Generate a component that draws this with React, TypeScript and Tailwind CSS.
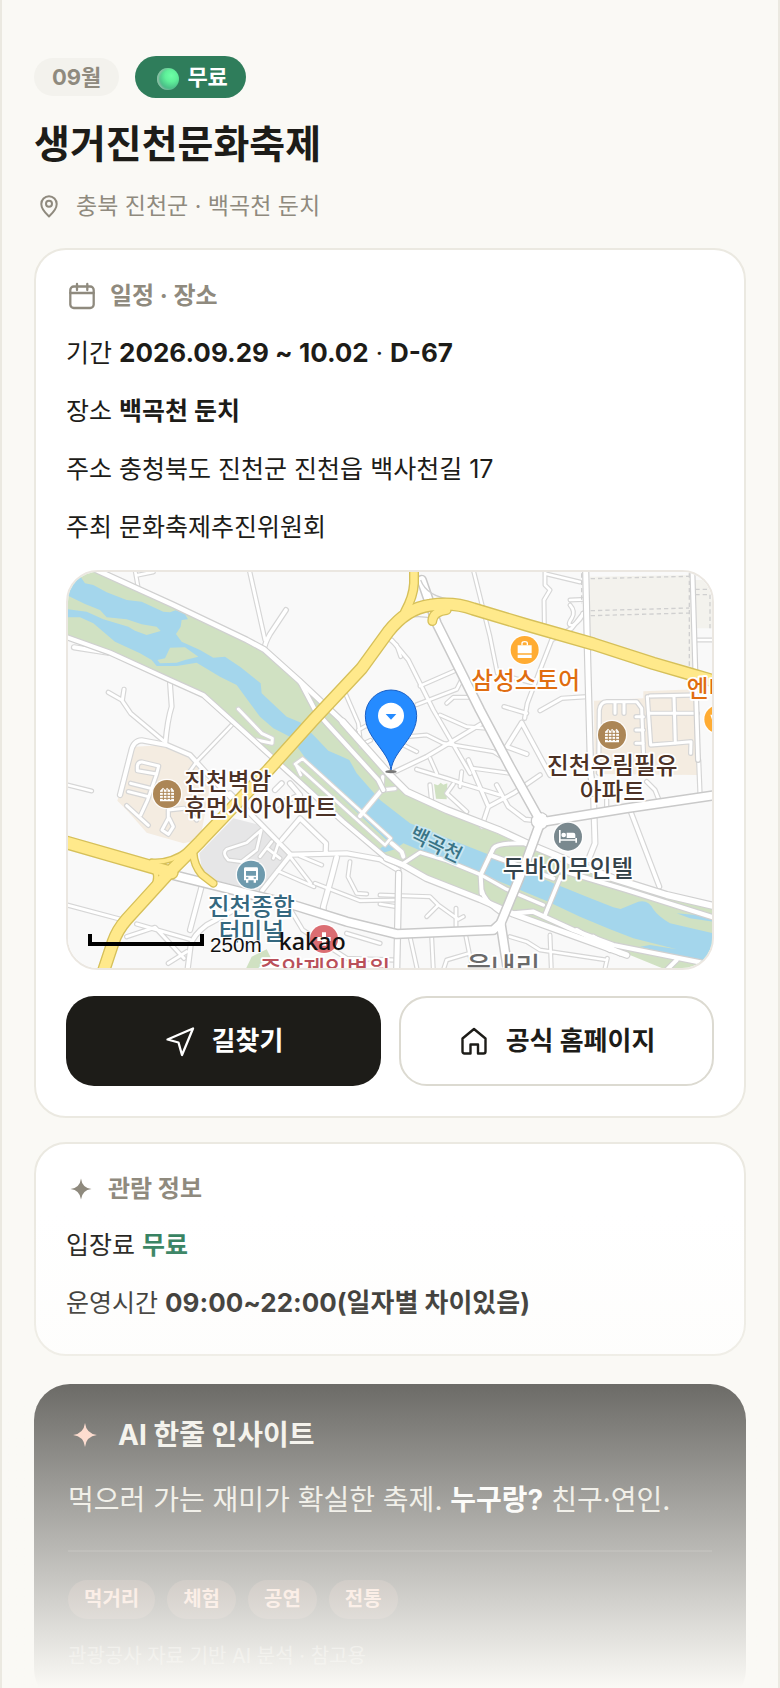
import React from "react";

type Road = [path: string, width: number];

// River bank, parks and built-up blocks
const AREAS: [points: string, fill: string][] = [
  ["1590,50 1890,45 1897,330 1590,235", "#f3f2ed"],
  ["1905,60 1960,60 1960,205 1910,205", "#f3f2ed"],
  ["1602,422 1750,415 1750,394 1905,388 1912,645 1604,642", "#f4ece1"],
  ["225,560 310,555 400,600 432,640 450,680 420,840 370,850 260,818 200,750 172,722 200,640", "#f4ece1"],
  ["520,775 620,800 690,875 600,992 430,955 418,880", "#e6e6e7"],
  ["575,1190 620,1168 636,1200 620,1230 556,1230", "#d0e1c2"],
  ["1122,672 1134,676 1142,668 1150,674 1162,670 1160,718 1128,716", "#d0e1c2"],
  [
    "24,30 110,36 230,90 550,240 610,272 715,360 850,485 990,645 1040,695 1160,750 1300,815 1420,870 1600,925 1760,985 1960,1030 1960,1230 1820,1230 1660,1165 1500,1115 1370,1060 1230,1005 1030,915 980,895 880,808 760,700 640,590 520,490 425,405 330,365 150,285 24,230",
    "#d0e1c2",
  ],
];

const WATER =
  "M58 45L75 70 100 75 140 97 200 120 245 125 310 155 330 157 347 151 375 163 384 178 365 180 362 200 348 222 365 245 420 270 460 293 495 290 540 320 602 370 605 400 680 470 720 487 760 525 805 572 850 592 868 600 890 640 960 720 1050 790 1200 850 1320 897 1400 935 1480 970 1580 1010 1660 1042 1682 1047Q1710 1035 1735 1025 1765 1018 1780 1048 1795 1070 1830 1090L1960 1120 1960 1208 1880 1195 1740 1160 1770 1155 1850 1168 1720 1135 1650 1108 1560 1070 1460 1023 1320 965 1250 935 1100 880 1030 850 1005 868 965 880 960 866 985 845 900 765 800 670 740 600 690 530 640 505 600 470 570 430 530 375 480 350 410 308 350 318 290 318 275 300 240 280 165 245 100 190 60 172 20 172 20 147 80 155 130 178 205 200 225 212 260 225 302 213 290 200 245 193 200 178 140 172 120 150 75 132 20 105 20 85Z";

const MINOR_ROADS: Road[] = [
  ["M225 30L234 80M230 46L280 36", 8],
  ["M568 30L615 240", 9],
  ["M678 150L630 222Q614 250 612 270", 11],
  ["M42 262L145 278", 12],
  ["M145 397L185 420 212 460 310 542M192 388L187 420", 9],
  ["M330 370L335 440Q322 480 316 552", 11],
  ["M180 705L213 575Q220 542 245 541L320 555 390 585 440 640 520 720", 12],
  ["M520 490L410 605 385 640", 8],
  ["M535 447L605 520 637 535 636 550 590 540", 9],
  ["M856 400L895 490 903 560M895 510L925 494M932 541L908 552", 8],
  ["M985 235L1010 255 1022 290", 8],
  // Apartment block west of the river
  ["M232 618Q234 605 246 606L296 618 290 642 232 632ZM290 642L262 722M212 670L272 685M205 695L265 710M262 722L242 765", 9],
  ["M200 737L265 796M325 750L325 775 306 810 325 823 340 800 328 775M325 750L372 745M390 760L410 780", 9],
  ["M10 672L95 693", 8],
  ["M10 1032L190 1080M230 1092L390 1138M200 1130L285 1102 372 1195M325 1210L380 1175", 9],
  ["M426 975L390 1110", 12],
  ["M382 1235L392 1155Q400 1125 440 1095L560 1030", 12],
  // Terminal and streets around it
  ["M604 810L560 848 500 868Q485 880 505 900L545 905 590 870 604 810M635 845L600 890M622 865L660 895M655 850L640 895", 8],
  ["M510 700L600 790 692 884", 12],
  ["M692 884L860 880 960 898 1015 930M692 884L606 992M665 840L720 775 798 850 797 880M690 670L720 705 640 740M645 690L665 670", 12],
  ["M652 932L762 980M690 890L752 970M720 888L785 915", 8],
  ["M870 905L864 950 890 1000 920 1002M765 970L900 1022 1010 1020", 8],
  ["M830 892L815 950 790 1040 790 1060", 14],
  ["M680 1030L728 1110 860 1195 1000 1200M860 1120L960 1150", 9],
  ["M722 600L705 612 975 855 992 835 728 596ZM708 615L722 645", 8],
  ["M900 768L965 690M995 850L1025 875 1030 890", 12],
  ["M968 650L965 690 1005 686", 10],
  // Streets east of the pin
  ["M1240 30L1290 230 1312 340 1420 370", 8],
  ["M1455 30L1455 75 1470 90 1452 120 1453 190M1460 42L1560 66", 8],
  ["M1580 118L1530 120M1530 135Q1548 155 1535 175 1518 200 1540 195 1565 180 1568 160", 8],
  ["M1570 160L1535 205 1475 240 1440 330 1402 430 1394 475", 9],
  ["M1332 440L1400 460M1440 452L1505 415 1580 410", 9],
  ["M1385 488L1470 645M1385 488L1340 560 1400 582", 11],
  ["M995 240L1045 300 1120 450 1230 640", 9],
  ["M1080 378L1190 330M1070 434L1190 388 1212 345M1160 430L1180 412 1240 412", 8],
  ["M1140 465L1220 500 1280 505", 8],
  ["M1005 635L1100 590 1270 488", 10],
  ["M1040 530L1100 525 1150 550 1300 575 1340 600M1030 555L1070 575M1110 595L1130 640", 8],
  ["M1070 628L1160 655 1210 672 1320 705M1180 672L1160 700 1220 755M1110 675L1115 725", 9],
  ["M1225 600L1285 740 1360 700 1440 645M1285 740L1265 800M1310 675L1345 740 1395 778 1440 783", 10],
  ["M1205 635L1200 680M1240 625L1350 640", 8],
  // Apartment block in the east
  ["M1616 640L1618 450Q1622 425 1640 425L1730 425 1745 445 1752 620M1665 430V460M1692 430V460M1728 470L1750 470M1728 510L1750 510M1728 550L1750 550", 9],
  ["M1770 408L1905 405M1762 410L1772 555 1840 550 1893 545 1892 580M1842 410L1846 550M1765 460L1912 460", 9],
  ["M1640 720V760M1760 665L1785 690 1795 715M1916 600L1920 700", 9],
  ["M1600 690L1605 850 1585 900", 14],
  ["M1712 755L1798 980", 11],
  ["M1905 240L1960 240", 8],
  // South bank streets
  ["M960 1005L1110 1010 1135 1035 1195 1078 1210 1070M1135 1035L1100 1070M1188 1045V1100M960 1032L1010 1040", 8],
  ["M1050 1130L1072 1230M1115 1130L1120 1230M1218 1130L1228 1180 1160 1200 1150 1230M1228 1180L1240 1230", 8],
  ["M1350 1130L1400 1145 1440 1170 1640 1200M1470 1125L1474 1230M1642 1195L1634 1230", 8],
];

const MAIN_ROADS: Road[] = [
  ["M10 228L150 278 330 360 430 405 530 495 690 640 850 785 980 895 1030 915", 12],
  ["M100 26L340 135 560 240 612 268 715 360 848 485", 14],
  ["M720 365L765 450 800 490 955 660 970 690", 12],
  ["M980 895L1030 915 1100 955 1260 1018 1360 1062 1520 1120 1700 1185", 16],
  ["M1030 910L1080 877 1160 902 1260 943 1340 988 1450 1035", 10],
  ["M1265 1000L1262 945 1300 865Q1312 848 1390 850M1265 990Q1270 1020 1320 1055M1290 885L1480 955", 12],
  ["M1455 1065L1502 950", 11],
  ["M1360 1060L1420 1055 1540 1110 1660 1155 1960 1215", 13],
  ["M1550 1110L1650 1170M1600 1130L1680 1180M1820 1230L1850 1200", 12],
  ["M1500 930L1700 990 1960 1072", 13],
  ["M848 485L990 645 1040 695 1160 750 1320 812 1400 850 1520 900 1660 955 1820 1005 1970 1040", 18],
  ["M1577 26L1583 300 1592 640 1600 700", 15],
  ["M1897 26L1905 300 1914 600", 11],
  ["M1010 1235L1013 1100 1016 940", 15],
];

const AVENUES: Road[] = [
  ["M1085 60L1130 190 1260 450 1350 620 1442 785 1400 900 1322 1090 1345 1240", 23],
  ["M1442 787L1700 745 1970 705", 23],
  ["M340 945L500 985 700 1035 860 1085 1010 1122 1300 1110 1322 1090", 23],
];

const HIGHWAYS: Road[] = [
  ["M1062 20V70Q1060 110 1035 155", 22],
  ["M1117 183Q1118 155 1160 150", 22],
  ["M400 880Q402 915 425 943L460 970", 18],
  ["M275 905Q330 910 385 870M275 925Q300 940 280 985", 12],
  ["M0 842L150 885 335 938", 34],
  ["M125 1250L160 1145Q172 1110 200 1078L330 935 420 845 625 630 760 480 905 325 985 215Q1040 145 1110 136 1180 125 1240 147L1400 195 1600 252 1780 310 1890 342 1980 368", 32],
];

function Roads({ roads, casing, fill, edge = 7 }: { roads: Road[]; casing: string; fill: string; edge?: number }) {
  return (
    <g fill="none" strokeLinecap="round" strokeLinejoin="round">
      {roads.map(([d, w]) => (
        <path key={d} d={d} stroke={casing} strokeWidth={w + edge} />
      ))}
      {roads.map(([d, w]) => (
        <path key={d} d={d} stroke={fill} strokeWidth={w} />
      ))}
    </g>
  );
}

function PoiDot({ x, y, fill, children }: { x: number; y: number; fill: string; children?: React.ReactNode }) {
  return (
    <g transform={`translate(${x} ${y})`}>
      <circle r="46" fill="#fff" fillOpacity=".85" />
      <circle r="42" fill={fill} />
      {children}
    </g>
  );
}

function ApartmentGlyph() {
  return (
    <g>
      <path d="M-21 22V-10L-12 -19 -5 -12 0 -19 7 -12 14 -19 21 -10V22Z" fill="#fff" />
      <path d="M-21 -5H21M-21 4H21M-21 13H21M-11 -14V18M0 -14V18M11 -14V18" stroke="#ac8656" strokeWidth="3" />
    </g>
  );
}

function FestivalMap() {
  return (
    <svg
      viewBox="24 36 1932 1188"
      className="block w-full font-['Noto_Sans_CJK_KR','Liberation_Sans',sans-serif]"
      role="img"
      aria-label="백곡천 둔치 지도"
    >
      <rect x="24" y="36" width="1932" height="1188" fill="#f9f9f9" />
      {AREAS.map(([points, fill]) => (
        <polygon key={points} points={points} fill={fill} />
      ))}
      <path d={WATER} fill="#a4d6ec" />
      <path d="M330 263L375 262 415 290 375 300 350 308 300 310 292 300 315 295Z" fill="#d0e1c2" />
      <path d="M1850 1060L1960 1070 1960 1085 1890 1075Z" fill="#a4d6ec" />

      <Roads roads={MINOR_ROADS} casing="#d6d6d6" fill="#fff" />
      <Roads roads={MAIN_ROADS} casing="#d0d0d0" fill="#fff" />
      <circle cx="1440" cy="783" r="26" fill="#fff" stroke="#c9c9c9" strokeWidth="4" />
      <Roads roads={AVENUES} casing="#c9c9c9" fill="#fff" edge={9} />
      <circle cx="1440" cy="783" r="23" fill="#fff" />
      <path d="M1082 60Q1100 110 1180 120M1050 172Q1090 165 1130 180" fill="none" stroke="#cfcfcf" strokeWidth="4" />
      <g fill="none" stroke="#d0d0d0" strokeWidth="4" strokeDasharray="13 9">
        <path d="M1592 56L1888 49M1592 152L1888 144M1592 167L1888 159M1565 40V130M1888 40V340M1906 88H1950M1906 104H1950V205" />
      </g>
      <Roads roads={HIGHWAYS} casing="#d6c05a" fill="#ffe98b" edge={8} />

      {/* Points of interest */}
      <PoiDot x={1394} y={270} fill="#ffac33">
        <path d="M-21 -14H21V10H-21ZM-21 14H21V24H-21Z" fill="#fff" />
        <path d="M-8 -14V-20Q-8 -25 0 -25 8 -25 8 -20V-14" fill="none" stroke="#fff" strokeWidth="4" />
      </PoiDot>
      <PoiDot x={1656} y={525} fill="#ac8656">
        <ApartmentGlyph />
      </PoiDot>
      <PoiDot x={321} y={702} fill="#ac8656">
        <ApartmentGlyph />
      </PoiDot>
      <PoiDot x={573} y={944} fill="#6e9aad">
        <path d="M-17 -22H17Q21 -22 21 -18V17H15V24H8V17H-8V24H-15V17H-21V-18Q-21 -22 -17 -22Z" fill="#fff" />
        <path d="M-15 -11H15V3H-15ZM-15 8H-8V12H-15ZM8 8H15V12H8Z" fill="#6e9aad" />
      </PoiDot>
      <PoiDot x={1524} y={830} fill="#7a898f">
        <path d="M-27 -20H-22V8H22V-6Q22 -12 16 -12H-4V4H27V18H22V12H-22V18H-27Z" fill="#fff" />
        <circle cx="-13" cy="-5" r="7" fill="#fff" />
      </PoiDot>
      <PoiDot x={792} y={1137} fill="#db6d72">
        <path d="M-6 -20H6V-6H20V6H6V20H-6V6H-20V-6H-6Z" fill="#fff" />
      </PoiDot>
      <PoiDot x={1975} y={478} fill="#ffac33">
        <path d="M-24 -14H0V16H-14Z" fill="#fff" />
      </PoiDot>

      <g fontSize="71" fontWeight="500" stroke="#fff" strokeWidth="11" strokeLinejoin="round" paintOrder="stroke">
        <text x="373" y="689" fill="#4c3226">진천벽암</text>
        <text x="373" y="767" fill="#4c3226">휴먼시아아파트</text>
        <text x="1397" y="386" textAnchor="middle" fill="#e06d10">삼성스토어</text>
        <text x="1880" y="412" fill="#e06d10">엔터</text>
        <text x="1657" y="643" textAnchor="middle" fill="#4c3226">진천우림필유</text>
        <text x="1657" y="719" textAnchor="middle" fill="#4c3226">아파트</text>
        <text x="1524" y="950" textAnchor="middle" fill="#35434a">두바이무인텔</text>
        <text x="574" y="1064" textAnchor="middle" fill="#35687f">진천종합</text>
        <text x="574" y="1141" textAnchor="middle" fill="#35687f">터미널</text>
        <text x="795" y="1254" textAnchor="middle" fill="#b9505a">중앙제일병원</text>
        <text x="1330" y="1249" textAnchor="middle" fontSize="80" fill="#6a6a6a">읍내리</text>
        <text x="0" y="0" transform="translate(1119 873) rotate(26)" textAnchor="middle" fontSize="60" stroke="#c9e6f0" fill="#3a7486">
          백곡천
        </text>
      </g>

      {/* Selected place */}
      <ellipse cx="993" cy="635" rx="17" ry="5" fill="#777" />
      <path
        d="M993 630C985 570 916 535 916 467A77 77 0 0 1 1070 467C1070 535 1001 570 993 630Z"
        fill="#258bff"
        stroke="#1a5fc4"
        strokeWidth="3"
      />
      <circle cx="993" cy="467" r="39" fill="#fff" />
      <path d="M977 462H1009L993 479Z" fill="#258bff" />

      {/* Scale and map provider */}
      <path d="M90 1122V1152H426V1122" fill="none" stroke="#000" strokeWidth="12" />
      <text x="450" y="1176" fontSize="62" fill="#111" stroke="#fff" strokeWidth="4" paintOrder="stroke" className="font-['Liberation_Sans',sans-serif]">
        250m
      </text>
      <text x="656" y="1169" fontSize="70" fontWeight="500" fill="#111" className="font-['Noto_Sans',sans-serif]">
        kakao
      </text>
    </svg>
  );
}

function Sparkle({ className }: { className: string }) {
  return (
    <svg viewBox="0 0 24 24" className={className} fill="currentColor" aria-hidden="true">
      <path d="M12 3.6Q12.9 11.1 20.4 12 12.9 12.9 12 20.4 11.1 12.9 3.6 12 11.1 11.1 12 3.6Z" />
      <path d="M12 6.5Q13 11 17.5 12 13 13 12 17.5 11 13 6.5 12 11 11 12 6.5Z" />
    </svg>
  );
}

const TAGS = ["먹거리", "체험", "공연", "전통"];

const App: React.FC = () => {
  return (
    <main className="relative flex h-screen flex-col overflow-hidden border-x-2 border-[#ebe9e1] bg-[#faf9f5] px-8 pt-14 font-['Inter','Noto_Sans_CJK_KR',sans-serif] text-[#1d1c18]">
      {/* Header */}
      <header className="shrink-0">
        <div className="flex items-center gap-4">
          <span className="rounded-full bg-[#f3f2ed] px-[18px] text-[22px] leading-[38px] font-bold text-[#8f8a7e]">09월</span>
          <span className="flex items-center gap-2 rounded-full bg-[#2f7d5b] pr-[18px] pl-[22px] text-[22px] leading-[42px] font-bold text-white">
            <i className="mt-1 size-[22px] rounded-full bg-[radial-gradient(circle_at_65%_35%,#6dffa6_0%,#5ff09a_30%,#4cc389_60%,#52958f_100%)] shadow-[inset_2px_0_2px_#8fbfa6]" />
            무료
          </span>
        </div>
        <h1 className="mt-[22px] text-[39px] leading-[48px] font-bold">생거진천문화축제</h1>
        <p className="mt-[22px] flex items-center gap-3 text-[23px] leading-8 text-[#8f8a7e]">
          <svg viewBox="0 0 30 30" className="size-[30px]" fill="none" stroke="currentColor" strokeWidth="2" aria-hidden="true">
            <path d="M15 25.4C12 22.6 7.3 18.5 7.3 13A7.7 7.7 0 0 1 22.7 13C22.7 18.5 18 22.6 15 25.4Z" strokeLinejoin="round" />
            <circle cx="15" cy="12.8" r="3" />
          </svg>
          충북 진천군 · 백곡천 둔치
        </p>
      </header>

      {/* Schedule and place */}
      <section className="mt-[26px] shrink-0 rounded-[32px] border-2 border-[#ebe9e1] bg-white p-[30px]">
        <h2 className="mb-5 flex items-center gap-3 text-2xl leading-8 font-bold text-[#8f8a7e]">
          <svg viewBox="0 0 32 32" className="size-8" fill="none" stroke="currentColor" strokeWidth="2.3" strokeLinecap="round" aria-hidden="true">
            <rect x="4.3" y="6.5" width="23.4" height="21.5" rx="3.5" />
            <path d="M4.3 13H27.7M11 4V10M21.3 4V10" />
          </svg>
          일정 · 장소
        </h2>
        <div className="flex flex-col gap-4 text-[25px] leading-[42px]">
          <p>기간 <strong className="text-[26px] font-bold">2026.09.29 ~ 10.02</strong> · <strong className="text-[26px] font-bold">D-67</strong></p>
          <p>장소 <strong className="font-bold">백곡천 둔치</strong></p>
          <p>주소 충청북도 진천군 진천읍 백사천길 17</p>
          <p>주최 문화축제추진위원회</p>
        </div>

        <div className="mt-[22px] overflow-hidden rounded-[32px] border-2 border-[#ebe7e1]">
          <FestivalMap />
        </div>

        <div className="mt-[26px] grid grid-cols-2 gap-[18px] text-[26px] leading-8 font-bold">
          <button type="button" className="flex h-[90px] items-center justify-center gap-4 rounded-[28px] bg-[#1d1c18] text-white">
            <svg viewBox="0 0 32 32" className="size-8" fill="none" stroke="currentColor" strokeWidth="2.3" strokeLinejoin="round" aria-hidden="true">
              <path d="M29 3.5L18 30 14.5 17.5 3.5 14.5Z" />
            </svg>
            길찾기
          </button>
          <a href="#homepage" className="flex h-[90px] items-center justify-center gap-4 rounded-[28px] border-2 border-[#dcdad1] bg-white">
            <svg viewBox="0 0 32 32" className="size-8" fill="none" stroke="currentColor" strokeWidth="2.4" strokeLinejoin="round" aria-hidden="true">
              <path d="M4.5 13.5L16 4 27.5 13.5V26.5Q27.5 28.5 25.5 28.5H20V19.5H12.5V28.5H6.5Q4.5 28.5 4.5 26.5Z" />
            </svg>
            공식 홈페이지
          </a>
        </div>
      </section>

      {/* Visit info */}
      <section className="mt-6 shrink-0 rounded-[32px] border-2 border-[#ebe9e1] bg-white p-[30px]">
        <h2 className="mb-5 flex items-center gap-3 text-2xl leading-[30px] font-bold text-[#8f8a7e]">
          <Sparkle className="size-[30px]" />
          관람 정보
        </h2>
        <div className="flex flex-col gap-4 text-[25px] leading-[42px]">
          <p>입장료 <strong className="font-bold text-[#2f7d5b]">무료</strong></p>
          <p>운영시간 <strong className="text-[26px] font-bold">09:00~22:00(일자별 차이있음)</strong></p>
        </div>
      </section>

      {/* AI insight */}
      <section className="mt-7 shrink-0 rounded-[36px] bg-[#1d1c18] p-[34px] text-[#f0eee6]">
        <h2 className="flex items-center gap-4 text-[28px] leading-8 font-bold">
          <Sparkle className="size-[34px] text-[#ffc3ae]" />
          AI 한줄 인사이트
        </h2>
        <p className="mt-6 text-[28px] leading-[48px] text-[#e4e2d8]">
          먹으러 가는 재미가 확실한 축제. <strong className="font-bold text-white">누구랑?</strong> 친구·연인.
        </p>
        <hr className="mt-[26px] border-t-2 border-white/10" />
        <ul className="mt-7 flex gap-3">
          {TAGS.map((tag) => (
            <li key={tag} className="rounded-full bg-[#ffab91]/20 px-4 text-[20px] leading-[39px] font-bold text-[#ffc3ae]">
              {tag}
            </li>
          ))}
        </ul>
        <p className="mt-[22px] text-[20px] leading-[30px] text-white/50">관광공사 자료 기반 AI 분석 · 참고용</p>
      </section>

      {/* Fade over the folded part */}
      <div className="pointer-events-none absolute inset-x-0 bottom-0 h-[28%] bg-linear-to-b from-[#faf9f5]/0 to-[#faf9f5]" />
    </main>
  );
};

export default App;
